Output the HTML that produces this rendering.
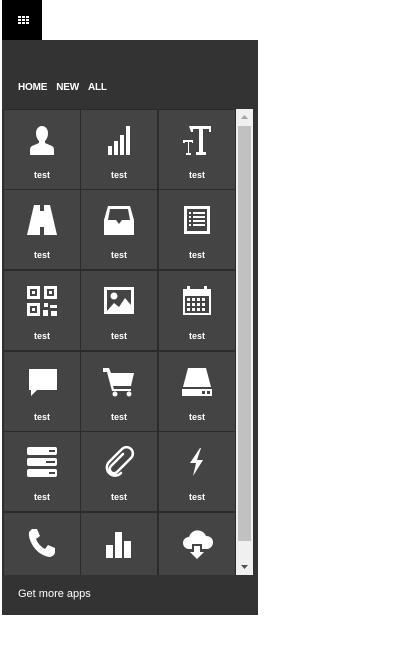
<!DOCTYPE html>
<html><head><meta charset="utf-8"><style>
body{margin:0;width:410px;height:657px;background:#fff;position:relative;overflow:hidden;font-family:"Liberation Sans",Arial,sans-serif}
.btn{position:absolute;left:2px;top:0;width:40px;height:40px;background:#000}
.panel{position:absolute;left:2px;top:40px;width:256px;height:575px;background:#333}
.nav{position:absolute;left:18px;top:82px;color:#fff;font-size:10px;font-weight:bold;letter-spacing:-0.2px}
.nav span{margin-right:9px}
.grid{position:absolute;left:3px;top:109px;width:233px;height:466px;background:#2b2b2b;overflow:hidden}
.t{position:absolute;width:76px;height:79px;background:#444}
.t svg{position:absolute;left:22px;top:14px}
.t b{position:absolute;left:0;right:0;top:60px;text-align:center;color:#fff;font-size:9px}
.sb{position:absolute;left:236px;top:109px;width:17px;height:466px;background:#f0f0f0}
.th{position:absolute;left:2px;top:17px;width:13px;height:415px;background:#c1c1c1}
.foot{position:absolute;left:18px;top:588px;color:#fff;font-size:11px}
</style></head><body>
<div class="btn"><svg width="40" height="40"><g fill="#fff"><rect x="16" y="16" width="3" height="2"/><rect x="20" y="16" width="3" height="2"/><rect x="24" y="16" width="3" height="2"/><rect x="16" y="19" width="3" height="2"/><rect x="20" y="19" width="3" height="2"/><rect x="24" y="19" width="3" height="2"/><rect x="16" y="22" width="3" height="2"/><rect x="20" y="22" width="3" height="2"/><rect x="24" y="22" width="3" height="2"/></g></svg></div>
<div class="panel"></div>
<div class="nav"><span>HOME</span><span>NEW</span><span>ALL</span></div>
<div class="grid">
<div class="t" style="left:1px;top:1px"><svg width="32" height="32" fill="#fff"><path d="M10 9a6 7 0 0 1 12 0q0 5-3 8v2l7 3q2 1 2 4v5h-24v-5q0-3 2-4l7-3v-2q-3-3-3-8z"/></svg><b>test</b></div>
<div class="t" style="left:78px;top:1px"><svg width="32" height="32" fill="#fff"><rect x="5" y="22" width="4" height="9"/><rect x="11" y="17" width="4" height="14"/><rect x="17" y="11" width="4" height="20"/><rect x="23" y="2" width="4" height="29"/></svg><b>test</b></div>
<div class="t" style="left:156px;top:1px"><svg width="32" height="32" fill="#fff"><path d="M8 2h22v6h-2v-3h-6v23h3v3h-10v-3h3v-23h-6v3h-2z"/><path d="M2 16h10v3h-1v-1h-3v11h2v2h-5v-2h2v-11h-3v1h-2z"/></svg><b>test</b></div>
<div class="t" style="left:1px;top:81px"><svg width="32" height="32" fill="#fff"><path d="M8 1h6v6h4v-6h6l7 30h-13v-8h-4v8h-13z"/></svg><b>test</b></div>
<div class="t" style="left:78px;top:81px"><svg width="32" height="32" fill="#fff"><path d="M5 2h22l4 14v15h-30v-15zM7 5l-2 11h8l3 4h0l3-4h8l-2-11z"/></svg><b>test</b></div>
<div class="t" style="left:156px;top:81px"><svg width="32" height="32" fill="#fff"><path d="M3 2h26v28h-26zM6 5v22h20v-22z"/><rect x="8" y="8" width="2" height="2"/><rect x="12" y="8" width="12" height="2"/><rect x="8" y="12" width="2" height="2"/><rect x="12" y="12" width="12" height="2"/><rect x="8" y="16" width="2" height="2"/><rect x="12" y="16" width="12" height="2"/><rect x="8" y="20" width="2" height="2"/><rect x="12" y="20" width="12" height="2"/></svg><b>test</b></div>
<div class="t" style="left:1px;top:162px"><svg width="32" height="32" fill="#fff"><path d="M1 1h13v13h-13zM4 4v7h7v-7z"/><rect x="6" y="6" width="3" height="3"/><path d="M18 1h13v13h-13zM21 4v7h7v-7z"/><rect x="23" y="6" width="3" height="3"/><path d="M1 18h13v13h-13zM4 21v7h7v-7z"/><rect x="6" y="23" width="3" height="3"/><rect x="18" y="18" width="4" height="4"/><rect x="24" y="20" width="7" height="3"/><rect x="17" y="25" width="5" height="6"/><rect x="25" y="26" width="6" height="5"/></svg><b>test</b></div>
<div class="t" style="left:78px;top:162px"><svg width="32" height="32" fill="#fff"><path d="M1 2h30v27h-30zM4 5v21h24v-21z"/><circle cx="11" cy="11" r="3.5"/><path d="M4 26l7-8 5 4 6-9 6 7v6z"/></svg><b>test</b></div>
<div class="t" style="left:156px;top:162px"><svg width="32" height="32" fill="#fff"><path d="M2 4h4v-3h3v3h14v-3h3v3h4v26h-28zM4 11v17h24v-17z"/><g><rect x="6" y="13" width="3" height="3"/><rect x="11" y="13" width="3" height="3"/><rect x="16" y="13" width="3" height="3"/><rect x="21" y="13" width="3" height="3"/><rect x="6" y="18" width="3" height="3"/><rect x="11" y="18" width="3" height="3"/><rect x="16" y="18" width="3" height="3"/><rect x="21" y="18" width="3" height="3"/><rect x="6" y="23" width="3" height="3"/><rect x="11" y="23" width="3" height="3"/><rect x="16" y="23" width="3" height="3"/><rect x="21" y="23" width="3" height="3"/></g></svg><b>test</b></div>
<div class="t" style="left:1px;top:243px"><svg width="32" height="32" fill="#fff"><path d="M3 3h28v21h-20l-6 6v-6h-2z"/></svg><b>test</b></div>
<div class="t" style="left:78px;top:243px"><svg width="32" height="32" fill="#fff"><path d="M0 2h6l2 5h23l-3 13h-18l1 3h17v2h-19l-5-19h-4z"/><circle cx="12" cy="28" r="2.5"/><circle cx="26" cy="28" r="2.5"/></svg><b>test</b></div>
<div class="t" style="left:156px;top:243px"><svg width="32" height="32" fill="#fff"><path d="M7 2h18l5 19h-28z"/><path d="M1 23h30v7h-30z"/><rect x="21" y="25" width="3" height="3" fill="#444"/><rect x="26" y="25" width="3" height="3" fill="#444"/></svg><b>test</b></div>
<div class="t" style="left:1px;top:323px"><svg width="32" height="32" fill="#fff"><rect x="1" y="1" width="30" height="8" rx="2"/><rect x="1" y="12" width="30" height="8" rx="2"/><rect x="1" y="23" width="30" height="8" rx="2"/><g fill="#444"><rect x="23" y="4" width="6" height="2"/><rect x="20" y="15" width="9" height="2"/><rect x="23" y="26" width="6" height="2"/></g></svg><b>test</b></div>
<div class="t" style="left:78px;top:323px"><svg width="32" height="32" fill="none" stroke="#fff" stroke-width="2.5" stroke-linecap="round"><path d="M20 8l-12 12a4 4 0 0 0 6 6l14-14a6 6 0 0 0-9-9l-13 13a8 8 0 0 0 12 11"/></svg><b>test</b></div>
<div class="t" style="left:156px;top:323px"><svg width="32" height="32" fill="#fff"><path d="M19 2l-10 15h6l-3 13l10-16h-6l4-12z"/></svg><b>test</b></div>
<div class="t" style="left:1px;top:404px"><svg width="32" height="32" fill="#fff"><path d="M6 2l5 0l3 7l-4 3q3 7 9 10l3-4l7 3l0 5q-2 4-6 4q-10-2-16-11q-5-8-4-14z"/></svg></div>
<div class="t" style="left:78px;top:404px"><svg width="32" height="32" fill="#fff"><rect x="3" y="18" width="7" height="13"/><rect x="12" y="5" width="7" height="26"/><rect x="21" y="14" width="7" height="17"/></svg></div>
<div class="t" style="left:156px;top:404px"><svg width="32" height="32" fill="#fff"><path d="M8 22a6 6 0 0 1 0-12a9 9 0 0 1 17-1a6.5 6.5 0 0 1 1 13h-5v-5h-10v5z"/><path d="M13 19h6v6h4l-7 7l-7-7h4z"/></svg></div>
</div>
<div class="sb"><svg width="17" height="17" style="position:absolute;top:0;left:0"><path d="M5 10h7l-3.5-4z" fill="#a3a3a3"/></svg><div class="th"></div><svg width="17" height="17" style="position:absolute;bottom:0;left:0"><path d="M5 7h7l-3.5 4z" fill="#505050"/></svg></div>
<div class="foot">Get more apps</div>
</body></html>
